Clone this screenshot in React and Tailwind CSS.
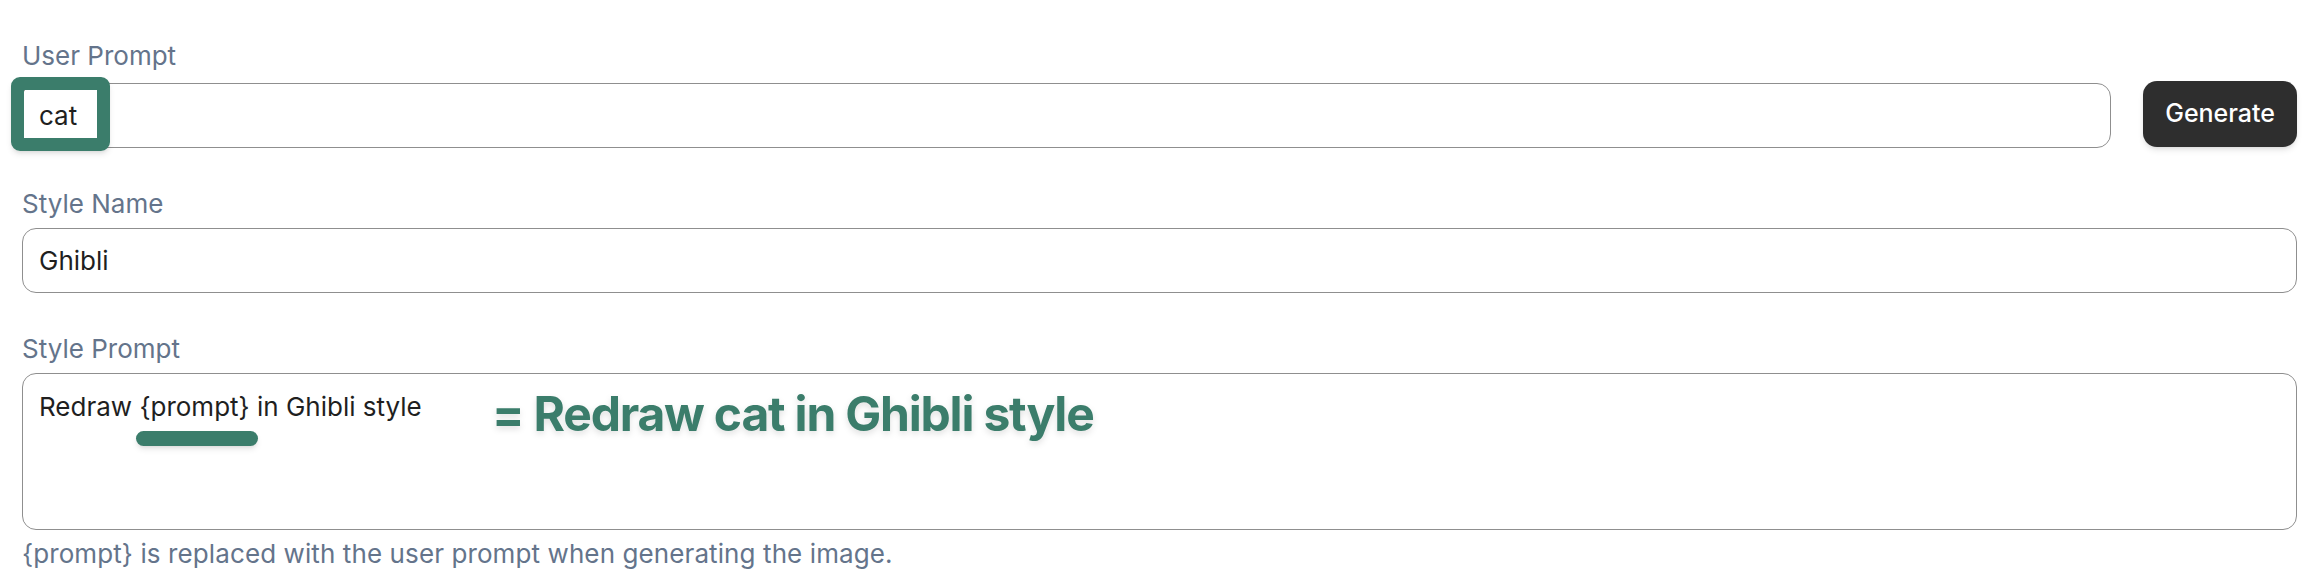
import React from 'react';

const Field = ({ label, className = '', children }) => (
  <div className={className}>
    <label className="block text-[26px] leading-[40px] text-[#64748b]">{label}</label>
    {children}
  </div>
);

export default function App() {
  return (
    <div className="relative min-h-screen bg-white pl-[22px] pr-[21px] pt-[36px] font-['Inter',sans-serif]">
      <Field label="User Prompt">
        <div className="mt-[5px] flex items-start gap-[32px]">
          <input
            readOnly
            value="cat"
            className="mt-[2px] h-[65px] flex-1 rounded-[14px] border border-[#8f8f8f] bg-white px-4 text-[26px] text-[#1f1f1f] outline-none"
          />
          <button className="h-[66px] rounded-[14px] bg-[#2e2e2e] px-[22px] text-[25px] font-medium text-white shadow-md">
            Generate
          </button>
        </div>
      </Field>

      <Field label="Style Name" className="mt-[36px]">
        <input
          readOnly
          value="Ghibli"
          className="mt-[4px] h-[65px] w-full rounded-[14px] border border-[#8f8f8f] bg-white px-4 text-[26px] text-[#1f1f1f] outline-none"
        />
      </Field>

      <Field label="Style Prompt" className="mt-[36px]">
        <textarea
          readOnly
          value="Redraw {prompt} in Ghibli style"
          className="mt-[4px] block h-[157px] w-full resize-none rounded-[14px] border border-[#8f8f8f] bg-white px-4 pt-[13px] text-[26px] leading-[40px] text-[#1f1f1f] outline-none"
        />
      </Field>

      <p className="mt-[4px] text-[26px] leading-[40px] tracking-[0.1px] text-[#64748b]">
        {'{prompt}'} is replaced with the user prompt when generating the image.
      </p>

      {/* annotations drawn over the form */}
      <div className="absolute left-[11px] top-[77px] h-[74px] w-[99px] rounded-[9px] border-[13px] border-[#3b7d6b] shadow-md" />
      <div className="absolute left-[136px] top-[431px] h-[15px] w-[122px] rounded-full bg-[#3b7d6b] shadow-md" />
      <div className="absolute left-[492px] top-[390px] whitespace-nowrap text-[48px] font-bold leading-[48px] tracking-tight text-[#3b7d6b] drop-shadow-md">
        = Redraw cat in Ghibli style
      </div>
    </div>
  );
}
